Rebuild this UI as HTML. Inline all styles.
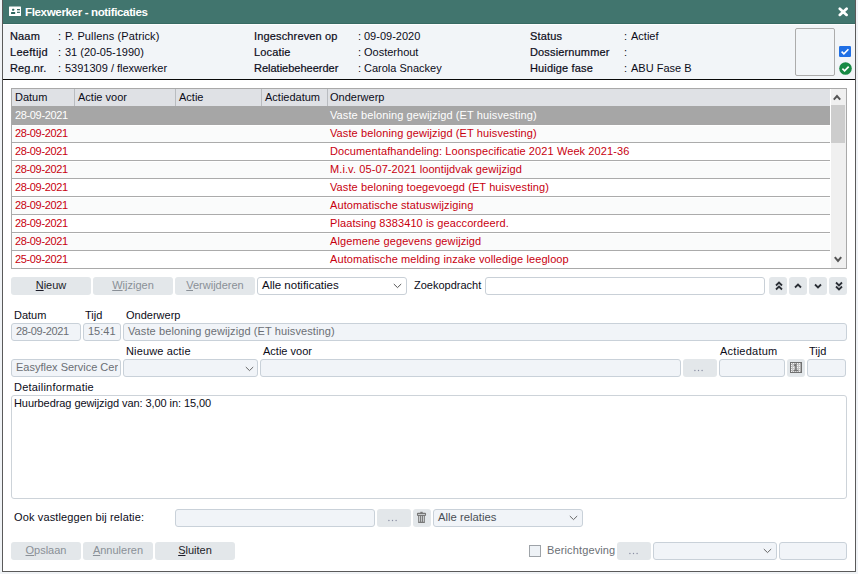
<!DOCTYPE html>
<html><head><meta charset="utf-8">
<style>
*{margin:0;padding:0;box-sizing:border-box}
html,body{width:858px;height:574px;overflow:hidden;background:#f0f3f6;font-family:"Liberation Sans",sans-serif;font-size:11px;color:#0c0c18}
.a{position:absolute}
.t{position:absolute;white-space:nowrap;line-height:13px;font-size:11px}
#dlg{position:absolute;left:2px;top:0;width:854px;height:572px;border:1px solid #5a5a5a;border-top:none;background:#fff}
#title{position:absolute;left:3px;top:0;width:852px;height:24px;background:#41756e;border-bottom:1px solid #376a63}
#hdr{position:absolute;left:3px;top:24px;width:852px;height:55px;background:#f2f5f8;border-top:1px solid #fdfefe}
#sep{position:absolute;left:3px;top:79px;width:852px;height:1px;background:#080808}
.fld{position:absolute;border:1px solid #c9d1d9;border-radius:3px;background:#f1f4f8;height:18px}
.btn{position:absolute;background:#e3e7ea;border-radius:3px;height:18px;text-align:center;line-height:16px;color:#8a9097}
.row{position:absolute;left:12px;width:818px;height:18px;border-bottom:1px solid #ababab;border-top:1px solid #fff;background:#fbfcfc}
.row .t{color:#c8000f}
.d{letter-spacing:-0.35px}
</style></head><body>
<div id="dlg"></div>
<div id="title"></div>
<svg class="a" style="left:9px;top:6px" width="12" height="11" viewBox="0 -0.6 12 11"><rect x="0" y="0" width="12" height="9.4" rx="0.4" fill="#fff"/><rect x="3.1" y="2.1" width="2.1" height="2.1" rx="0.6" fill="#2f6760"/><rect x="2" y="5.5" width="4.2" height="1.9" rx="0.5" fill="#2f6760"/><rect x="8" y="2.4" width="2.9" height="3.9" fill="#c5d5d2"/><rect x="8" y="2.4" width="2.9" height="1" fill="#2f6760"/><rect x="8" y="5.5" width="2.9" height="0.9" fill="#2f6760"/></svg>
<div class="t" style="left:25px;top:4.5px;color:#fff;font-weight:bold;font-size:11.6px;letter-spacing:-0.38px">Flexwerker - notificaties</div>
<svg class="a" style="left:838px;top:7px" width="11" height="10" viewBox="0 0 11 10"><path d="M1.8 1.7 L8.6 7.9 M8.6 1.7 L1.8 7.9" stroke="#fff" stroke-width="2.7" stroke-linecap="round"/></svg>

<div id="hdr"></div>
<div id="sep"></div>
<!-- header info -->
<div class="t" style="left:10px;top:30px;-webkit-text-stroke:0.2px;letter-spacing:0.15px">Naam</div>
<div class="t" style="left:10px;top:46px;-webkit-text-stroke:0.2px;letter-spacing:0.3px">Leeftijd</div>
<div class="t" style="left:10px;top:62px;-webkit-text-stroke:0.2px;letter-spacing:0.15px">Reg.nr.</div>
<div class="t" style="left:58px;top:30px">:</div><div class="t" style="left:65px;top:30px;letter-spacing:0.12px">P. Pullens (Patrick)</div>
<div class="t" style="left:58px;top:46px">:</div><div class="t" style="left:65px;top:46px">31 (20-05-1990)</div>
<div class="t" style="left:58px;top:62px">:</div><div class="t" style="left:65px;top:62px">5391309 / flexwerker</div>
<div class="t" style="left:254px;top:30px;-webkit-text-stroke:0.2px;letter-spacing:0.15px">Ingeschreven op</div>
<div class="t" style="left:254px;top:46px;-webkit-text-stroke:0.2px;letter-spacing:0.15px">Locatie</div>
<div class="t" style="left:254px;top:62px;-webkit-text-stroke:0.2px;letter-spacing:0px">Relatiebeheerder</div>
<div class="t" style="left:358px;top:30px">:</div><div class="t" style="left:364px;top:30px">09-09-2020</div>
<div class="t" style="left:358px;top:46px">:</div><div class="t" style="left:364px;top:46px">Oosterhout</div>
<div class="t" style="left:358px;top:62px">:</div><div class="t" style="left:364px;top:62px">Carola Snackey</div>
<div class="t" style="left:530px;top:30px;-webkit-text-stroke:0.2px;letter-spacing:0.15px">Status</div>
<div class="t" style="left:530px;top:46px;-webkit-text-stroke:0.2px;letter-spacing:0.15px">Dossiernummer</div>
<div class="t" style="left:530px;top:62px;-webkit-text-stroke:0.2px;letter-spacing:0.15px">Huidige fase</div>
<div class="t" style="left:624px;top:30px">:</div><div class="t" style="left:631px;top:30px">Actief</div>
<div class="t" style="left:624px;top:46px">:</div>
<div class="t" style="left:624px;top:62px">:</div><div class="t" style="left:631px;top:62px">ABU Fase B</div>
<div class="a" style="left:795px;top:28px;width:40px;height:48px;border:1px solid #acacac;border-radius:2px;background:#f2f5f8"></div>
<svg class="a" style="left:839px;top:46px" width="12" height="11" viewBox="0 0 12 11"><rect width="12" height="11" rx="1.2" fill="#1f6fe5"/><path d="M2.6 5.6 L4.9 7.8 L9.4 3.2" stroke="#fff" stroke-width="1.6" fill="none"/></svg>
<svg class="a" style="left:839px;top:62px" width="13" height="13" viewBox="0 0 13 13"><circle cx="6.5" cy="6.5" r="6.3" fill="#178a45"/><path d="M3.4 6.7 L5.6 8.8 L9.7 4.6" stroke="#fff" stroke-width="1.7" fill="none"/></svg>

<!-- grid -->
<div class="a" style="left:11px;top:88px;width:836px;height:181px;border:1px solid #a9a9a9;background:#fff"></div>
<div class="a" style="left:12px;top:89px;width:818px;height:17px;background:#dfe1e5"></div>
<div class="a" style="left:74px;top:89px;width:1px;height:17px;background:#b9bcc0"></div>
<div class="a" style="left:175px;top:89px;width:1px;height:17px;background:#b9bcc0"></div>
<div class="a" style="left:261px;top:89px;width:1px;height:17px;background:#b9bcc0"></div>
<div class="a" style="left:327px;top:89px;width:1px;height:17px;background:#b9bcc0"></div>
<div class="t" style="left:15px;top:91px">Datum</div>
<div class="t" style="left:78px;top:91px">Actie voor</div>
<div class="t" style="left:179px;top:91px">Actie</div>
<div class="t" style="left:265px;top:91px">Actiedatum</div>
<div class="t" style="left:330px;top:91px">Onderwerp</div>

<div class="a" style="left:12px;top:106px;width:818px;height:19px;background:#a6a6a6"></div>
<div class="t d" style="left:15px;top:109px;color:#fff">28-09-2021</div>
<div class="t" style="left:330px;top:109px;color:#fff;letter-spacing:0.1px">Vaste beloning gewijzigd (ET huisvesting)</div>

<div class="row" style="background:#fafbfb;top:125px"><div class="t d" style="left:3px;top:1px">28-09-2021</div><div class="t" style="left:318px;top:1px;letter-spacing:0.1px">Vaste beloning gewijzigd (ET huisvesting)</div></div>
<div class="row" style="background:#fff;top:143px"><div class="t d" style="left:3px;top:1px">28-09-2021</div><div class="t" style="left:318px;top:1px;letter-spacing:0.1px">Documentafhandeling: Loonspecificatie 2021 Week 2021-36</div></div>
<div class="row" style="background:#fafbfb;top:161px"><div class="t d" style="left:3px;top:1px">28-09-2021</div><div class="t" style="left:318px;top:1px;letter-spacing:0.1px">M.i.v. 05-07-2021 loontijdvak gewijzigd</div></div>
<div class="row" style="background:#fff;top:179px"><div class="t d" style="left:3px;top:1px">28-09-2021</div><div class="t" style="left:318px;top:1px;letter-spacing:0.1px">Vaste beloning toegevoegd (ET huisvesting)</div></div>
<div class="row" style="background:#fafbfb;top:197px"><div class="t d" style="left:3px;top:1px">28-09-2021</div><div class="t" style="left:318px;top:1px;letter-spacing:0.1px">Automatische statuswijziging</div></div>
<div class="row" style="background:#fff;top:215px"><div class="t d" style="left:3px;top:1px">28-09-2021</div><div class="t" style="left:318px;top:1px;letter-spacing:0.1px">Plaatsing 8383410 is geaccordeerd.</div></div>
<div class="row" style="background:#fafbfb;top:233px"><div class="t d" style="left:3px;top:1px">28-09-2021</div><div class="t" style="left:318px;top:1px;letter-spacing:0.1px">Algemene gegevens gewijzigd</div></div>
<div class="row" style="background:#fff;top:251px;height:17px;border-bottom:none"><div class="t d" style="left:3px;top:1px">25-09-2021</div><div class="t" style="left:318px;top:1px;letter-spacing:0.1px">Automatische melding inzake volledige leegloop</div></div>

<!-- scrollbar -->
<div class="a" style="left:831px;top:89px;width:15px;height:179px;background:#f0f0f0"></div>
<div class="a" style="left:831px;top:105px;width:14px;height:38px;background:#cdcdcd"></div>
<svg class="a" style="left:833.2px;top:93.6px" width="8" height="7" viewBox="0 0 8 7"><path d="M0.8 5.6 L4 2 L7.2 5.6" stroke="#555" stroke-width="2" fill="none"/></svg>
<svg class="a" style="left:833.5px;top:256.3px" width="8" height="7" viewBox="0 0 8 7"><path d="M0.8 1.2 L4 5 L7.2 1.2" stroke="#555" stroke-width="2" fill="none"/></svg>

<!-- toolbar -->
<div class="btn" style="left:11px;top:277px;width:80px;color:#1c1c28"><u>N</u>ieuw</div>
<div class="btn" style="left:93px;top:277px;width:80px"><u>W</u>ijzigen</div>
<div class="btn" style="left:175px;top:277px;width:80px"><u>V</u>erwijderen</div>
<div class="a" style="left:257px;top:277px;width:150px;height:18px;border:1px solid #c9d0d7;border-radius:3px;background:#fff"></div>
<div class="t" style="left:262px;top:279px;font-size:11.5px">Alle notificaties</div>
<svg class="a" style="left:393px;top:283px" width="9" height="6" viewBox="0 0 9 6"><path d="M0.8 1 L4.5 4.6 L8.2 1" stroke="#555" stroke-width="1" fill="none"/></svg>
<div class="t" style="left:414px;top:279px">Zoekopdracht</div>
<div class="a" style="left:485px;top:277px;width:280px;height:18px;border:1px solid #c9d0d7;border-radius:3px;background:#fff"></div>
<div class="btn" style="left:769px;top:277px;width:18px"></div>
<div class="btn" style="left:789px;top:277px;width:18px"></div>
<div class="btn" style="left:809px;top:277px;width:18px"></div>
<div class="btn" style="left:829px;top:277px;width:18px"></div>
<svg class="a" style="left:774.5px;top:280.5px" width="8" height="10" viewBox="0 0 8 10"><path d="M1 4.5 L4 1.5 L7 4.5 M1 8.5 L4 5.5 L7 8.5" stroke="#2b2f36" stroke-width="1.8" fill="none"/></svg>
<svg class="a" style="left:794.3px;top:282.5px" width="8" height="6" viewBox="0 0 8 6"><path d="M1 4.5 L4 1.5 L7 4.5" stroke="#2b2f36" stroke-width="1.8" fill="none"/></svg>
<svg class="a" style="left:814.3px;top:282.5px" width="8" height="6" viewBox="0 0 8 6"><path d="M1 1.5 L4 4.5 L7 1.5" stroke="#2b2f36" stroke-width="1.8" fill="none"/></svg>
<svg class="a" style="left:834.5px;top:280.5px" width="8" height="10" viewBox="0 0 8 10"><path d="M1 1.5 L4 4.5 L7 1.5 M1 5.5 L4 8.5 L7 5.5" stroke="#2b2f36" stroke-width="1.8" fill="none"/></svg>

<!-- detail form -->
<div class="t" style="left:14px;top:309px">Datum</div>
<div class="t" style="left:85px;top:309px">Tijd</div>
<div class="t" style="left:126px;top:309px">Onderwerp</div>
<div class="fld" style="left:11px;top:323px;width:70px"></div>
<div class="t d" style="left:16px;top:325px;color:#6b6f75">28-09-2021</div>
<div class="fld" style="left:83px;top:323px;width:38px"></div>
<div class="t" style="left:88px;top:325px;color:#6b6f75">15:41</div>
<div class="fld" style="left:123px;top:323px;width:724px"></div>
<div class="t" style="left:128px;top:325px;color:#6b6f75;letter-spacing:0.1px">Vaste beloning gewijzigd (ET huisvesting)</div>

<div class="t" style="left:126px;top:345px;letter-spacing:0.14px">Nieuwe actie</div>
<div class="t" style="left:263px;top:345px">Actie voor</div>
<div class="t" style="left:720px;top:345px;letter-spacing:0.25px">Actiedatum</div>
<div class="t" style="left:809px;top:345px">Tijd</div>
<div class="fld" style="left:11px;top:359px;width:110px;overflow:hidden"></div>
<div class="a" style="left:12px;top:359px;width:106px;height:18px;overflow:hidden"><div class="t" style="left:4px;top:2px;color:#6b6f75">Easyflex Service Center</div></div>
<div class="fld" style="left:123px;top:359px;width:135px"></div>
<svg class="a" style="left:245px;top:366px" width="9" height="6" viewBox="0 0 9 6"><path d="M0.8 1 L4.5 4.6 L8.2 1" stroke="#666" stroke-width="1" fill="none"/></svg>
<div class="fld" style="left:260px;top:359px;width:421px"></div>
<div class="btn" style="left:683px;top:359px;width:34px"></div><svg class="a" style="left:694px;top:368.5px" width="9" height="3" viewBox="0 0 9 3"><circle cx="0.9" cy="1.5" r="0.7" fill="#8a8ea3"/><circle cx="4.5" cy="1.5" r="0.7" fill="#8a8ea3"/><circle cx="8.1" cy="1.5" r="0.7" fill="#8a8ea3"/></svg>
<div class="fld" style="left:719px;top:359px;width:66px"></div>
<div class="btn" style="left:787px;top:359px;width:18px"></div>
<svg class="a" style="left:790px;top:362px" width="12" height="11" viewBox="0 0 12 11"><rect x="0.6" y="0.6" width="10.8" height="9.8" fill="#c4c4c4" stroke="#707070" stroke-width="1.2"/><rect x="1.0" y="1.0" width="1" height="1" fill="#f4f4f4"/><rect x="1.0" y="3.0" width="1" height="1" fill="#f4f4f4"/><rect x="1.0" y="5.0" width="1" height="1" fill="#f4f4f4"/><rect x="1.0" y="7.0" width="1" height="1" fill="#f4f4f4"/><rect x="1.0" y="9.0" width="1" height="1" fill="#f4f4f4"/><rect x="3.0" y="1.0" width="1" height="1" fill="#f4f4f4"/><rect x="3.0" y="3.0" width="1" height="1" fill="#f4f4f4"/><rect x="3.0" y="5.0" width="1" height="1" fill="#f4f4f4"/><rect x="3.0" y="7.0" width="1" height="1" fill="#f4f4f4"/><rect x="3.0" y="9.0" width="1" height="1" fill="#f4f4f4"/><rect x="5.0" y="1.0" width="1" height="1" fill="#f4f4f4"/><rect x="5.0" y="3.0" width="1" height="1" fill="#f4f4f4"/><rect x="5.0" y="5.0" width="1" height="1" fill="#f4f4f4"/><rect x="5.0" y="7.0" width="1" height="1" fill="#f4f4f4"/><rect x="5.0" y="9.0" width="1" height="1" fill="#f4f4f4"/><rect x="7.0" y="1.0" width="1" height="1" fill="#f4f4f4"/><rect x="7.0" y="3.0" width="1" height="1" fill="#f4f4f4"/><rect x="7.0" y="5.0" width="1" height="1" fill="#f4f4f4"/><rect x="7.0" y="7.0" width="1" height="1" fill="#f4f4f4"/><rect x="7.0" y="9.0" width="1" height="1" fill="#f4f4f4"/><rect x="9.0" y="1.0" width="1" height="1" fill="#f4f4f4"/><rect x="9.0" y="3.0" width="1" height="1" fill="#f4f4f4"/><rect x="9.0" y="5.0" width="1" height="1" fill="#f4f4f4"/><rect x="9.0" y="7.0" width="1" height="1" fill="#f4f4f4"/><rect x="9.0" y="9.0" width="1" height="1" fill="#f4f4f4"/><path d="M3.8 3.6 L5.9 2.4 V8.3 M3.6 8.6 H8.3" stroke="#747474" stroke-width="1.5" fill="none"/></svg>
<div class="fld" style="left:807px;top:359px;width:39px"></div>

<div class="t" style="left:14px;top:381px;letter-spacing:0.22px">Detailinformatie</div>
<div class="a" style="left:11px;top:395px;width:836px;height:104px;border:1px solid #cdd3d9;border-radius:3px;background:#fff"></div>
<div class="t" style="left:14px;top:397px;letter-spacing:-0.07px">Huurbedrag gewijzigd van: 3,00 in: 15,00</div>

<!-- relatie row -->
<div class="t" style="left:14px;top:511px;letter-spacing:0.13px">Ook vastleggen bij relatie:</div>
<div class="fld" style="left:175px;top:509px;width:200px"></div>
<div class="btn" style="left:377px;top:509px;width:34px"></div><svg class="a" style="left:388px;top:519px" width="9" height="3" viewBox="0 0 9 3"><circle cx="0.9" cy="1.5" r="0.7" fill="#8a8ea3"/><circle cx="4.5" cy="1.5" r="0.7" fill="#8a8ea3"/><circle cx="8.1" cy="1.5" r="0.7" fill="#8a8ea3"/></svg>
<div class="btn" style="left:413px;top:509px;width:18px"></div>
<svg class="a" style="left:416px;top:511px" width="11" height="13" viewBox="0 0 11 13"><rect x="4.3" y="0.8" width="2.4" height="1.6" fill="#787878"/><rect x="1.5" y="2.4" width="8" height="2" rx="0.4" fill="none" stroke="#787878" stroke-width="1.1"/><path d="M2.7 4.6 V11.4 H8.3 V4.6 M4.6 4.6 V11 M6.4 4.6 V11" fill="none" stroke="#787878" stroke-width="1.1"/></svg>
<div class="fld" style="left:433px;top:509px;width:150px"></div>
<div class="t" style="left:438px;top:511px;font-size:11.3px;color:#4a4f56">Alle relaties</div>
<svg class="a" style="left:569px;top:515px" width="9" height="6" viewBox="0 0 9 6"><path d="M0.8 1 L4.5 4.6 L8.2 1" stroke="#666" stroke-width="1" fill="none"/></svg>

<!-- bottom buttons -->
<div class="btn" style="left:11px;top:542px;width:70px"><u>O</u>pslaan</div>
<div class="btn" style="left:83px;top:542px;width:70px"><u>A</u>nnuleren</div>
<div class="btn" style="left:155px;top:542px;width:80px;color:#1c1c28"><u>S</u>luiten</div>
<div class="a" style="left:529px;top:545px;width:12px;height:12px;border:1px solid #9ea3a8;background:#eef2f6"></div>
<div class="t" style="left:547px;top:544px;color:#6b6f75;letter-spacing:0.13px">Berichtgeving</div>
<div class="btn" style="left:617px;top:542px;width:34px"></div><svg class="a" style="left:628.5px;top:551.5px" width="9" height="3" viewBox="0 0 9 3"><circle cx="0.9" cy="1.5" r="0.7" fill="#8a8ea3"/><circle cx="4.5" cy="1.5" r="0.7" fill="#8a8ea3"/><circle cx="8.1" cy="1.5" r="0.7" fill="#8a8ea3"/></svg>
<div class="fld" style="left:653px;top:542px;width:124px"></div>
<svg class="a" style="left:763px;top:548px" width="9" height="6" viewBox="0 0 9 6"><path d="M0.8 1 L4.5 4.6 L8.2 1" stroke="#666" stroke-width="1" fill="none"/></svg>
<div class="fld" style="left:779px;top:542px;width:68px"></div>
</body></html>
